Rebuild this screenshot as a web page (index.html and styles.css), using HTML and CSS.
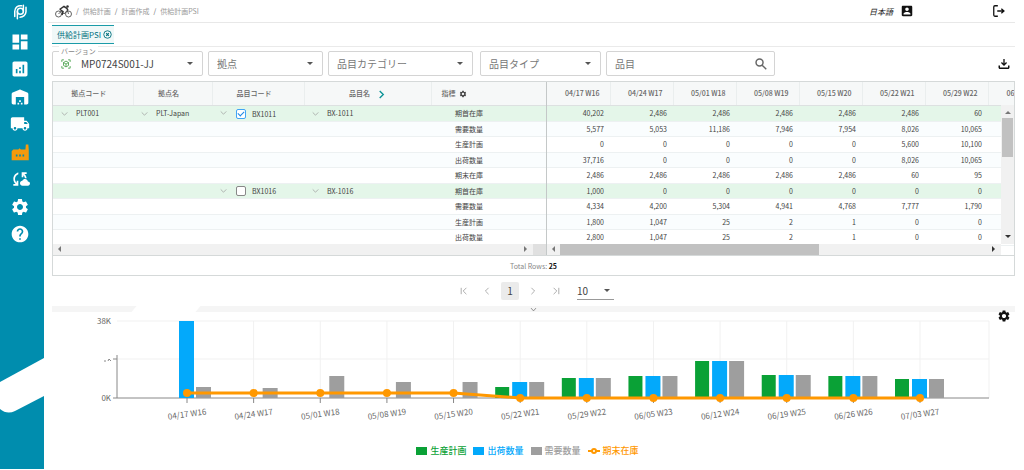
FILE: index.html
```html
<!DOCTYPE html>
<html lang="ja">
<head>
  <meta charset="UTF-8">
  <meta name="viewport" content="width=device-width, initial-scale=1.0">
  <title>供給計画PSI</title>
  <link rel="stylesheet" href="styles.css">
</head>
<body>

  <aside class="sidebar">
    <a href="#" class="logo" aria-label="Home">
      <svg viewBox="0 0 24 24" fill="none" stroke="#fff" stroke-width="2" stroke-linecap="round">
        <circle cx="12.5" cy="11" r="4"/>
        <path d="M8.500 11v10M5 18V11a7.500 7.500 0 0 1 9-7.300M16.500 3v8M20 5.500v6a8 8 0 0 1-8 7.500"/>
      </svg>
    </a>
    <nav class="menu">
      <a href="#" aria-label="Dashboard"><svg viewBox="0 0 24 24"><path d="M3 13h8V3H3v10zm0 8h8v-6H3v6zm10 0h8V11h-8v10zm0-18v6h8V3h-8z"/></svg></a>
      <a href="#" aria-label="Analytics"><svg viewBox="0 0 24 24"><path d="M19 3H5c-1.100 0-2 .9-2 2v14c0 1.100.9 2 2 2h14c1.100 0 2-.9 2-2V5c0-1.100-.9-2-2-2zM9 17H7v-5h2v5zm4 0h-2v-3h2v3zm0-5h-2v-2h2v2zm4 5h-2V7h2v10z"/></svg></a>
      <a href="#" aria-label="Warehouse"><svg viewBox="0 0 24 24"><path d="M22 19V8.350c0-.82-.5-1.550-1.260-1.860l-8-3.200c-.48-.19-1.010-.19-1.490 0l-8 3.200C2.500 6.800 2 7.540 2 8.350V19c0 1.100.9 2 2 2h3v-9h10v9h3c1.100 0 2-.9 2-2zm-11 0H9v2h2v-2zm2-3h-2v2h2v-2zm2 3h-2v2h2v-2z"/></svg></a>
      <a href="#" aria-label="Shipping"><svg viewBox="0 0 24 24"><path d="M20 8h-3V4H3c-1.100 0-2 .9-2 2v11h2c0 1.660 1.340 3 3 3s3-1.340 3-3h6c0 1.660 1.340 3 3 3s3-1.340 3-3h2v-5l-3-4zM6 18.500c-.83 0-1.500-.67-1.500-1.500s.67-1.500 1.500-1.500 1.500.67 1.500 1.500-.67 1.500-1.500 1.500zm13.500-9l1.960 2.500H17V9.500h2.500zm-1.500 9c-.83 0-1.500-.67-1.500-1.500s.67-1.500 1.500-1.500 1.500.67 1.500 1.500-.67 1.500-1.500 1.500z"/></svg></a>
      <a href="#" class="active" aria-label="Supply plan"><svg viewBox="0 0 24 24" fill-rule="evenodd"><path d="M2 11l2-2h6l1.500-1.500L13 9h5.500L19 3h3l.5 6v13H2V11zm5 4v2.500h2V15H7zm4 0v2.500h2V15h-2zm4 0v2.500h2V15h-2z"/></svg></a>
      <a href="#" aria-label="Sync"><svg viewBox="0 0 24 24"><path d="M21.500 14.980c-.02 0-.03 0-.05.01C21.200 13.300 19.760 12 18 12c-1.400 0-2.600.83-3.160 2.020C13.260 14.100 12 15.400 12 17c0 1.660 1.340 3 3 3l6.500-.02c1.380 0 2.500-1.120 2.500-2.500s-1.120-2.500-2.500-2.500zM10 4.260v2.090C7.670 7.180 6 9.390 6 12c0 1.770.78 3.340 2 4.440V14h2v6H4v-2h2.730C5.060 16.540 4 14.400 4 12c0-3.730 2.550-6.850 6-7.740zM20 6h-2.730c1.430 1.260 2.410 3.010 2.660 5h-2.020c-.23-1.360-.93-2.550-1.910-3.440V10h-2V4h6v2z"/></svg></a>
      <a href="#" aria-label="Settings"><svg viewBox="0 0 24 24"><use href="#gear"/></svg></a>
      <a href="#" aria-label="Help"><svg viewBox="0 0 24 24"><path d="M12 2C6.480 2 2 6.480 2 12s4.480 10 10 10 10-4.480 10-10S17.520 2 12 2zm1 17h-2v-2h2v2zm2.070-7.750l-.9.92C13.450 12.900 13 13.500 13 15h-2v-.5c0-1.100.45-2.100 1.170-2.830l1.240-1.260c.37-.36.59-.86.59-1.410 0-1.100-.9-2-2-2s-2 .9-2 2H8c0-2.210 1.790-4 4-4s4 1.790 4 4c0 .88-.36 1.680-.93 2.250z"/></svg></a>
    </nav>
    <svg class="ribbon" viewBox="0 0 44 60"><path d="M0 25L44 1V39L15 54Q7 58 0 52Z" fill="#fff"/></svg>
  </aside>

  <main>
    <header class="topbar">
      <svg class="bike" viewBox="0 0 34 26" fill="none" stroke="#333" stroke-width="1.500">
        <circle cx="7" cy="18" r="6"/><circle cx="27" cy="18" r="6"/>
        <path d="M7 18l6-6 5 6 7-8 2 8" />
        <path d="M9 9l9-6 5 3 3 4M10 9l6 4-2 7" stroke-width="3"/>
        <circle cx="25" cy="3" r="2.500" fill="#333" stroke="none"/>
      </svg>
      <nav class="breadcrumb">
        <span>/</span><a href="#">供給計画</a><span>/</span><a href="#">計画作成</a><span>/</span><a href="#">供給計画PSI</a>
      </nav>
      <div class="user">
        <a href="#" class="lang">日本語</a>
        <button class="icon-btn" aria-label="Account"><svg viewBox="0 0 24 24"><path d="M3 5v14c0 1.100.89 2 2 2h14c1.100 0 2-.9 2-2V5c0-1.100-.9-2-2-2H5c-1.110 0-2 .9-2 2zm12 4c0 1.660-1.340 3-3 3s-3-1.340-3-3 1.340-3 3-3 3 1.340 3 3zm-9 8c0-2 4-3.100 6-3.100s6 1.100 6 3.100v1H6v-1z"/></svg></button>
        <button class="icon-btn logout" aria-label="Logout"><svg viewBox="0 0 24 24" fill="none" stroke="#111" stroke-width="2.200"><path d="M10 3H5a2 2 0 0 0-2 2v14a2 2 0 0 0 2 2h5M9 12h11M16 8l4.500 4-4.500 4"/></svg></button>
      </div>
    </header>

    <div class="tabs">
      <button class="tab">供給計画PSI
        <svg viewBox="0 0 24 24" fill="none" stroke="#00707f" stroke-width="2.400"><circle cx="12" cy="12" r="10"/><path d="M8.500 8.500l7 7M15.500 8.500l-7 7" stroke-width="3"/></svg>
      </button>
    </div>

    <div class="filters">
      <div class="field version">
        <label for="version">バージョン</label>
        <svg class="cube" viewBox="0 0 24 24" fill="none" stroke="#43a047" stroke-width="2"><path d="M2 7V2h5M17 2h5v5M22 17v5h-5M7 22H2v-5M12 5l6 3.500v7L12 19l-6-3.500v-7zM6 8.500l6 3.500 6-3.500M12 12v7"/></svg>
        <select id="version"><option>MP0724S001-JJ</option></select>
      </div>
      <div class="field site"><select aria-label="拠点"><option>拠点</option></select></div>
      <div class="field category"><select aria-label="品目カテゴリー"><option>品目カテゴリー</option></select></div>
      <div class="field type"><select aria-label="品目タイプ"><option>品目タイプ</option></select></div>
      <div class="field search">
        <input type="text" placeholder="品目" aria-label="品目">
        <svg viewBox="0 0 24 24" fill="none" stroke="#666" stroke-width="2.500"><circle cx="9.500" cy="9.500" r="6"/><path d="M14 14l7 7"/></svg>
      </div>
      <button class="icon-btn download" aria-label="Download"><svg viewBox="0 0 24 24"><path d="M20 15v4H4v-4H1v4c0 1.700 1.300 3 3 3h16c1.700 0 3-1.300 3-3v-4h-3zM18 10l-1.800-1.800L13.300 11V2h-2.600v9L7.800 8.200 6 10l6 6z"/></svg></button>
    </div>

    <section class="grid">
      <div class="panes">
        <div class="pane fixed">
          <table>
            <colgroup><col class="c1"><col class="c2"><col class="c3"><col class="c4"><col class="c5"></colgroup>
            <thead>
              <tr>
                <th>拠点コード</th>
                <th>拠点名</th>
                <th>品目コード</th>
                <th class="name">品目名<svg class="next" viewBox="0 0 10 10" fill="none" stroke="#0a9396" stroke-width="1.500"><path d="M3 1l4 4-4 4"/></svg></th>
                <th class="measure">指標<svg class="cog" viewBox="0 0 24 24"><use href="#gear"/></svg></th>
              </tr>
            </thead>
            <tbody id="left-rows"></tbody>
          </table>
          <div class="hscroll left"><i class="arrow-l"></i><i class="arrow-r"></i><b></b></div>
        </div>
        <div class="pane weeks">
          <div class="weeks-body">
            <table>
              <thead><tr id="week-head"></tr></thead>
              <tbody id="week-rows"></tbody>
            </table>
            <div class="vscroll"><i class="arrow-u"></i><b></b><i class="arrow-d"></i></div>
          </div>
          <div class="hscroll right"><i class="arrow-l"></i><b></b><i class="arrow-r"></i></div>
        </div>
      </div>
      <div class="total">Total Rows: <strong>25</strong></div>
    </section>

    <div class="pager">
      <button aria-label="First"><svg viewBox="0 0 10 10"><path d="M1.500 1v8M8 1L4 5l4 4"/></svg></button>
      <button aria-label="Previous"><svg viewBox="0 0 10 10"><path d="M7 1L3 5l4 4"/></svg></button>
      <button class="current">1</button>
      <button aria-label="Next"><svg viewBox="0 0 10 10"><path d="M3 1l4 4-4 4"/></svg></button>
      <button aria-label="Last"><svg viewBox="0 0 10 10"><path d="M2 1l4 4-4 4M8.500 1v8"/></svg></button>
      <div class="page-size"><select aria-label="Rows per page"><option>10</option></select></div>
    </div>

    <div class="splitter"><svg viewBox="0 0 10 10"><path d="M1.500 3L5 7l3.500-4"/></svg></div>

    <section class="chart">
      <button class="icon-btn chart-settings" aria-label="Chart settings"><svg viewBox="0 0 24 24"><use href="#gear"/></svg></button>
      <svg id="plot" viewBox="0 0 963 120"></svg>
      <ul class="legend">
        <li class="prod"><i></i>生産計画</li>
        <li class="ship"><i></i>出荷数量</li>
        <li class="demand"><i></i>需要数量</li>
        <li class="stock"><svg viewBox="0 0 12 8" fill="none" stroke="#ff9800" stroke-width="2"><path d="M0 4h4M8 4h4"/><circle cx="6" cy="4" r="2"/></svg>期末在庫</li>
      </ul>
    </section>
  </main>

  <svg class="defs">
    <path id="gear" d="M19.140 12.940c.04-.3.06-.61.06-.94 0-.32-.02-.64-.07-.94l2.030-1.580c.18-.14.23-.41.12-.61l-1.920-3.320c-.12-.22-.37-.29-.59-.22l-2.390.96c-.5-.38-1.030-.7-1.620-.94l-.36-2.540c-.04-.24-.24-.41-.48-.41h-3.840c-.24 0-.43.17-.47.41l-.36 2.540c-.59.24-1.130.57-1.620.94l-2.390-.96c-.22-.08-.47 0-.59.22L2.740 8.870c-.12.21-.08.47.12.61l2.030 1.580c-.05.3-.09.63-.09.94s.02.64.07.94l-2.030 1.580c-.18.14-.23.41-.12.61l1.920 3.320c.12.22.37.29.59.22l2.390-.96c.5.38 1.030.7 1.620.94l.36 2.540c.05.24.24.41.48.41h3.840c.24 0 .44-.17.47-.41l.36-2.540c.59-.24 1.130-.56 1.620-.94l2.390.96c.22.08.47 0 .59-.22l1.920-3.320c.12-.22.07-.47-.12-.61l-2.010-1.580zM12 15.600c-1.980 0-3.600-1.620-3.600-3.600s1.620-3.600 3.600-3.600 3.600 1.620 3.600 3.600-1.620 3.600-3.600 3.600z"/>
  </svg>

  <script>
    const weeks = ['04/17 W16', '04/24 W17', '05/01 W18', '05/08 W19', '05/15 W20', '05/22 W21',
      '05/29 W22', '06/05 W23', '06/12 W24', '06/19 W25', '06/26 W26', '07/03 W27'];

    const rows = [
      { measure: '期首在庫', item: 'BX1011', name: 'BX-1011', site: 'PLT001', siteName: 'PLT-Japan', checked: true,
        values: ['40,202', '2,486', '2,486', '2,486', '2,486', '2,486', '60'] },
      { measure: '需要数量', values: ['5,577', '5,053', '11,186', '7,946', '7,954', '8,026', '10,065'] },
      { measure: '生産計画', values: ['0', '0', '0', '0', '0', '5,600', '10,100'] },
      { measure: '出荷数量', values: ['37,716', '0', '0', '0', '0', '8,026', '10,065'] },
      { measure: '期末在庫', values: ['2,486', '2,486', '2,486', '2,486', '2,486', '60', '95'] },
      { measure: '期首在庫', item: 'BX1016', name: 'BX-1016', checked: false,
        values: ['1,000', '0', '0', '0', '0', '0', '0'] },
      { measure: '需要数量', values: ['4,334', '4,200', '5,304', '4,941', '4,768', '7,777', '1,790'] },
      { measure: '生産計画', values: ['1,800', '1,047', '25', '2', '1', '0', '0'] },
      { measure: '出荷数量', values: ['2,800', '1,047', '25', '2', '1', '0', '0'] }
    ];

    const caret = '<svg class="caret" viewBox="0 0 10 10"><path d="M1 2l4 4 4-4"/></svg>';

    function cell(text) {
      return text ? `<td>${caret}${text}</td>` : '<td></td>';
    }

    let left = '';
    let right = '';
    rows.forEach(row => {
      const cls = row.item ? ' class="group"' : '';
      const box = row.item
        ? `<label><input type="checkbox" ${row.checked ? 'checked' : ''}>${row.item}</label>` : '';
      left += `<tr${cls}>${cell(row.site)}${cell(row.siteName)}${cell(box)}${cell(row.name)}<td class="measure">${row.measure}</td></tr>`;
      right += `<tr${cls}>${row.values.map(v => `<td>${v}</td>`).join('')}<td></td></tr>`;
    });
    document.getElementById('left-rows').innerHTML = left;
    document.getElementById('week-rows').innerHTML = right;
    document.getElementById('week-head').innerHTML = weeks.slice(0, 8).map(w => `<th>${w}</th>`).join('');

    // Chart: values are bar heights on a scale where 77 is 38K
    const prod = [0, 0, 0, 0, 0, 11, 20, 22, 37, 23, 22, 19];
    const ship = [77, 0, 0, 0, 0, 16, 20, 22, 37, 23, 22, 19];
    const demand = [11, 10, 22, 16, 16, 16, 20, 22, 37, 23, 22, 19];
    const stock = [5, 5, 5, 5, 5, 0, 0, 0, 0, 0, 0, 0];
    const base = 86;
    const xAt = i => 135 + i * 733 / 11;

    let svg = '<path class="gridline" d="M65 9H937V86M65 47H937"/>';
    weeks.forEach((w, i) => { svg += `<path class="gridline" d="M${xAt(i)} 9V86"/>`; });
    svg += '<path class="axis" d="M65 43V86M61 47H65M61 86H937"/>';
    weeks.forEach((w, i) => {
      const x = xAt(i);
      svg += `<path class="axis" d="M${x} 86v5"/>`;
      svg += `<rect class="prod" x="${x - 25}" y="${base - prod[i]}" width="14" height="${prod[i]}"/>`;
      svg += `<rect class="ship" x="${x - 8}" y="${base - ship[i]}" width="15" height="${ship[i]}"/>`;
      svg += `<rect class="demand" x="${x + 9}" y="${base - demand[i]}" width="15" height="${demand[i]}"/>`;
      svg += `<text x="${x}" y="105" text-anchor="middle" transform="rotate(-8 ${x} 102)">${w}</text>`;
    });
    svg += `<polyline class="stock" points="${stock.map((v, i) => `${xAt(i)},${base - v}`).join(' ')}"/>`;
    stock.forEach((v, i) => { svg += `<circle class="dot" cx="${xAt(i)}" cy="${base - v}" r="4"/>`; });
    svg += '<text x="59" y="12" text-anchor="end">38K</text><text x="59" y="89" text-anchor="end">0K</text>';
    svg += '<path class="axis" d="M52 49h2M56 49l1-2 2 2"/>';
    document.getElementById('plot').innerHTML = svg;
  </script>

</body>
</html>
```
FILE: styles.css
```css
* {
  box-sizing: border-box;
}

body {
  margin: 0;
  display: flex;
  min-height: 100vh;
  background: #fff;
  color: #444;
  font-family: "Noto Sans CJK JP", sans-serif;
  font-size: 7px;
}

a {
  color: inherit;
  text-decoration: none;
}

button {
  border: 0;
  padding: 0;
  background: none;
  font-family: inherit;
  color: inherit;
}

select,
input {
  font-family: inherit;
  color: inherit;
}

.defs {
  position: absolute;
  width: 0;
  height: 0;
}

/* Sidebar */
.sidebar {
  position: relative;
  width: 44px;
  flex: none;
  margin-bottom: 1px;
  padding-right: 4px;
  background: #008dae;
  display: flex;
  flex-direction: column;
  align-items: center;
}

.logo svg {
  display: block;
  width: 18px;
  height: 18px;
  margin-top: 3px;
}

.menu {
  display: flex;
  flex-direction: column;
  justify-content: space-between;
  height: 212px;
  margin-top: 11px;
}

.menu svg {
  display: block;
  width: 20px;
  height: 20px;
  fill: #fff;
}

.menu .active svg {
  fill: #f59a0c;
}

.ribbon {
  position: absolute;
  left: 0;
  top: 357px;
  width: 44px;
  height: 60px;
}

main {
  flex: 1;
  min-width: 0;
  padding: 0 9px 0 8px;
}

/* Header */
.topbar {
  display: flex;
  align-items: center;
  height: 23px;
  margin-left: -4px;
  padding: 0 9px 0 7px;
  border-bottom: 1px solid #e8e8e8;
}

.bike {
  width: 17px;
  height: 13px;
}

.breadcrumb {
  display: flex;
  gap: 4px;
  margin-left: 4px;
  color: #999;
}

.breadcrumb span {
  color: #666;
}

.user {
  display: flex;
  align-items: center;
  margin-left: auto;
  color: #222;
}

.lang {
  font-size: 8px;
  font-style: italic;
  margin-right: 7px;
}

.icon-btn svg {
  display: block;
  width: 14px;
  height: 14px;
  fill: #111;
}

.logout {
  margin-left: 78px;
}

.logout svg {
  fill: none;
}

.tabs {
  height: 24px;
  padding-top: 2px;
  border-bottom: 1px solid #eaeaea;
}

.tab {
  display: flex;
  align-items: center;
  gap: 2px;
  height: 19px;
  padding: 0 2px 0 5px;
  border-top: 1px solid #1a9ba8;
  border-bottom: 1px solid #1a9ba8;
  background: #f0f8f8;
  color: #00707f;
  font-size: 8px;
}

.tab svg {
  width: 9px;
  height: 9px;
}

/* Filters */
.filters {
  display: flex;
  align-items: center;
  margin-top: 4px;
}

.field {
  position: relative;
  display: flex;
  align-items: center;
  height: 25px;
  margin-right: 5px;
  border: 1px solid #d4d4d4;
  border-radius: 2px;
  color: #777;
}

.field select,
.field input {
  width: 100%;
  height: 100%;
  padding: 0 8px;
  border: 0;
  background: none;
  appearance: none;
  font-size: 10px;
  outline: none;
}

.field input::placeholder {
  color: #777;
}

.field:not(.search)::after,
.page-size::after {
  content: "";
  position: absolute;
  right: 9px;
  top: 10px;
  border: 3px solid transparent;
  border-top-color: #555;
  border-bottom: 0;
}

.field label {
  position: absolute;
  left: 6px;
  top: -6px;
  padding: 0 2px;
  background: #fff;
  color: #888;
  font-size: 7px;
  line-height: 10px;
}

.version {
  width: 151px;
  color: #444;
}

.cube {
  width: 10px;
  height: 10px;
  margin-left: 8px;
  flex: none;
}

.version select {
  padding-left: 10px;
}

.site {
  width: 115px;
}

.category {
  width: 145px;
  margin-right: 7px;
}

.type {
  width: 121px;
}

.search {
  width: 169px;
}

.search svg {
  width: 14px;
  height: 14px;
  margin-right: 6px;
  flex: none;
}

.download {
  margin-left: auto;
  margin-right: 5px;
}

.download svg {
  width: 12px;
  height: 12px;
}

/* Table */
.grid {
  margin-top: 5px;
  border: 1px solid #d5d9d9;
}

.panes {
  display: flex;
}

.fixed {
  width: 494px;
  flex: none;
  border-right: 1px solid #c4c8c8;
}

.weeks {
  flex: 1;
  min-width: 0;
}

.weeks-body {
  position: relative;
  overflow: hidden;
}

table {
  border-collapse: collapse;
  table-layout: fixed;
  width: 493px;
  line-height: 10px;
}

.weeks table {
  width: 504px;
}

.c1 { width: 80px; }
.c2 { width: 79px; }
.c3 { width: 92px; }
.c4 { width: 127px; }
.c5 { width: 115px; }

th {
  height: 23px;
  padding: 0 8px 0 0;
  border-right: 1px solid #eaeeee;
  border-bottom: 1px solid #dde1e1;
  background: #f6f8f8;
  color: #666;
  font-weight: 500;
  white-space: nowrap;
}

th:last-child {
  border-right: 0;
}

.weeks th {
  padding: 0 10px 0 0;
  text-align: right;
}

th.name {
  padding-left: 8px;
}

th.measure {
  padding-left: 10px;
  text-align: left;
}

.next {
  width: 9px;
  height: 9px;
  margin-left: 7px;
  vertical-align: middle;
}

.cog {
  width: 8px;
  height: 8px;
  margin-left: 3px;
  vertical-align: middle;
  fill: #444;
}

td {
  height: 15px;
  padding: 0 0 0 8px;
  border-bottom: 1px solid #edf1f2;
  white-space: nowrap;
}

tr:nth-child(odd) td {
  height: 16px;
}

tr:nth-child(2) td,
tr:nth-child(4) td,
tr:nth-child(8) td {
  background: #fafdfe;
}

tr.group td {
  background: #e4f6e9;
}

.weeks td {
  padding: 0 6px 0 0;
  text-align: right;
}

td.measure {
  padding-left: 24px;
}

td label {
  display: inline-flex;
  align-items: center;
  vertical-align: middle;
}

td input {
  appearance: none;
  width: 10px;
  height: 10px;
  margin: 0 6px 0 1px;
  border: 1px solid #888;
  border-radius: 2px;
  background: #fff;
}

td input:checked {
  border-color: #42a5f5;
}

td input:checked::before {
  content: "";
  display: block;
  width: 5px;
  height: 3px;
  margin: 1px;
  border-left: 1px solid #1e88e5;
  border-bottom: 1px solid #1e88e5;
  transform: rotate(-45deg);
}

.caret {
  width: 7px;
  height: 7px;
  margin-right: 8px;
  vertical-align: middle;
  fill: none;
  stroke: #999;
}

/* Scrollbars */
.hscroll {
  position: relative;
  display: flex;
  align-items: center;
  height: 11px;
  margin-top: -2px;
  background: #f1f1f1;
}

.hscroll i,
.vscroll i {
  border: 3px solid transparent;
}

.hscroll .arrow-l {
  margin-left: 2px;
  border-right-color: #777;
}

.hscroll .arrow-r {
  margin-left: auto;
  margin-right: 3px;
  border-left-color: #777;
}

.hscroll b {
  height: 100%;
}

.left b {
  width: 13px;
  background: #e0e0e0;
}

.right {
  margin-right: 13px;
}

.right b {
  width: 57%;
  margin-left: 5px;
  background: #c1c1c1;
}

.right .arrow-r {
  border-left-color: #333;
}

.vscroll {
  position: absolute;
  top: 23px;
  right: 0;
  bottom: 2px;
  width: 13px;
  display: flex;
  flex-direction: column;
  align-items: center;
  background: #f1f1f1;
}

.vscroll b {
  width: 11px;
  height: 39px;
  margin-top: 4px;
  background: #c1c1c1;
}

.vscroll .arrow-u {
  margin-top: 3px;
  border-bottom-color: #777;
}

.vscroll .arrow-d {
  margin-top: auto;
  margin-bottom: 3px;
  border-top-color: #333;
}

.total {
  height: 20px;
  border-top: 1px solid #d5d9d9;
  text-align: center;
  font-size: 7px;
  line-height: 20px;
  color: #888;
}

.total strong {
  color: #111;
}

/* Paging */
.pager {
  display: flex;
  align-items: center;
  justify-content: center;
  gap: 5px;
  height: 30px;
  padding-left: 2px;
}

.pager button {
  width: 18px;
  height: 18px;
  font-size: 10px;
}

.pager svg {
  width: 8px;
  height: 8px;
  fill: none;
  stroke: #999;
}

.pager .current {
  border-radius: 2px;
  background: #ebebeb;
}

.page-size {
  position: relative;
  width: 37px;
  height: 19px;
  margin-left: 7px;
  border-bottom: 1px solid #999;
}

.page-size select {
  width: 100%;
  height: 100%;
  padding: 0;
  border: 0;
  background: none;
  appearance: none;
  font-size: 10px;
}

.page-size::after {
  right: 4px;
  top: 8px;
}

.splitter {
  position: relative;
  height: 6px;
  background: #f5f5f5;
}

.splitter::before {
  content: "";
  position: absolute;
  left: 82px;
  top: 0;
  width: 64px;
  height: 6px;
  background: #fff;
  transform: skewX(-40deg);
}

.splitter svg {
  display: block;
  width: 7px;
  height: 7px;
  margin: auto;
  fill: none;
  stroke: #666;
}

/* Chart */
.chart {
  position: relative;
}

#plot {
  display: block;
  width: 100%;
}

#plot text {
  font-size: 8px;
  fill: #666;
}

.gridline {
  fill: none;
  stroke: #f1f1f1;
}

.axis {
  fill: none;
  stroke: #888;
}

rect.prod { fill: #0aa136; }
rect.ship { fill: #03a9fb; }
rect.demand { fill: #9e9e9e; }

polyline.stock {
  fill: none;
  stroke: #ff9800;
  stroke-width: 3;
}

.dot {
  fill: #ff9800;
}

.chart-settings {
  position: absolute;
  right: 4px;
  top: -3px;
}

.legend {
  display: flex;
  justify-content: center;
  gap: 7px;
  margin: 0;
  padding: 12px 12px 0 0;
  list-style: none;
  font-size: 9px;
  font-weight: 500;
  line-height: 14px;
}

.legend li {
  display: flex;
  align-items: center;
  gap: 3px;
}

.legend i {
  width: 11px;
  height: 8px;
  background: currentColor;
}

.legend svg {
  width: 12px;
  height: 8px;
}

li.prod { color: #0aa136; }
li.ship { color: #03a9fb; }
li.demand { color: #9e9e9e; }
li.stock { color: #ff9800; }
```
